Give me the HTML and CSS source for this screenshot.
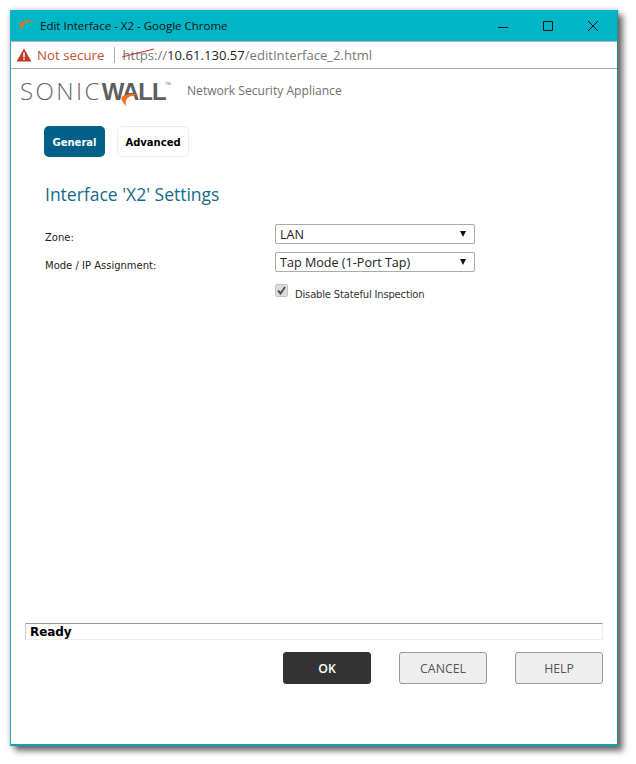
FILE: index.html
```html
<!DOCTYPE html>
<html>
<head>
    <title>Edit Interface - X2 - Google Chrome</title>
    <link rel="stylesheet" href="styles.css">
</head>
<body>
    <div class="window">
        <header class="titlebar">
            <svg class="favicon" width="16" height="12" viewBox="0 0 16 12">
                <path d="M16 1.2C11 0 5 0 1.5 2.5 0 3.8 .5 6 3.5 10.5 3 7 4.5 3.6 8 2.6 10.500 1.900 13 1.600 16 1.200Z" fill="#e8701a"/>
            </svg>
            <span class="title">Edit Interface - X2 - Google Chrome</span>
            <div class="controls">
                <svg width="12" height="12" viewBox="0 0 12 12"><path d="M1 7.500H11" stroke="#111" fill="none"/></svg>
                <svg width="12" height="12" viewBox="0 0 12 12"><path d="M1.500 1.500H10.500V10.500H1.500Z" stroke="#111" fill="none"/></svg>
                <svg width="12" height="12" viewBox="0 0 12 12"><path d="M1 1L11 11M11 1L1 11" stroke="#111" fill="none"/></svg>
            </div>
        </header>
        <div class="addressbar">
            <svg class="warn" width="16" height="14" viewBox="0 0 16 14">
                <path d="M8 .5L15.500 13.500H.5Z" fill="#c53929"/>
                <path d="M7.200 4.500H8.800V9.200H7.200ZM7.200 10.200H8.800V11.800H7.200Z" fill="#fff"/>
            </svg>
            <span class="not-secure">Not secure</span>
            <span class="divider"></span>
            <span class="url"><span class="scheme">https<svg class="strike" width="33" height="10" viewBox="0 0 33 10"><path d="M0 9L32 1" stroke="#c53929" stroke-width="1.200" fill="none"/></svg></span>://<span class="host">10.61.130.57</span>/editInterface_2.html</span>
        </div>
        <div class="brand">
            <div class="logo">
                <span class="logo-sonic">SONIC</span><span class="logo-wall">WALL</span><span class="logo-tm">TM</span>
                <svg class="swoosh" width="20" height="14" viewBox="0 0 20 14">
                    <path d="M20 1.500C14 .5 7 .5 3 3 0 4.500 1 7 6 13.500 5 9 6 5 10 3.400 13 2.400 16 2 20 1.500Z" fill="#f0701c"/>
                </svg>
            </div>
            <span class="appliance">Network Security Appliance</span>
        </div>
        <main class="content">
            <nav class="tabs">
                <a class="tab tab-active">General</a>
                <a class="tab">Advanced</a>
            </nav>
            <h1 class="heading">Interface 'X2' Settings</h1>
            <div class="form">
                <label class="field-label">Zone:</label>
                <div class="select"><span>LAN</span><i class="arrow"></i></div>
                <label class="field-label">Mode / IP Assignment:</label>
                <div class="select"><span>Tap Mode (1-Port Tap)</span><i class="arrow"></i></div>
                <div></div>
                <div class="check-row">
                    <span class="checkbox">
                        <svg width="13" height="13" viewBox="0 0 13 13"><path d="M3 6.500L5.500 9.500L10 3" stroke="#555" stroke-width="2" fill="none"/></svg>
                    </span>
                    <span class="check-label">Disable Stateful Inspection</span>
                </div>
            </div>
        </main>
        <div class="status">Ready</div>
        <div class="buttons">
            <button class="btn btn-ok">OK</button>
            <button class="btn">CANCEL</button>
            <button class="btn">HELP</button>
        </div>
    </div>
</body>
</html>
```

FILE: styles.css
```css
* {
    margin: 0;
    padding: 0;
    box-sizing: border-box;
}

body {
    background: #fff;
    font-family: "Open Sans", sans-serif;
    padding: 10px 18px 18px 10px;
    height: 764px;
    overflow: hidden;
}

.window {
    width: 608px;
    height: 736px;
    background: #fff;
    border: 1px solid #14b4c6;
    border-top: 0;
    border-right-color: #1b8f9c;
    border-bottom: 2px solid #17a0b0;
    box-shadow: 5px 5px 6px rgba(0, 0, 0, 0.55), 0 0 5px rgba(0, 0, 0, 0.25);
    display: flex;
    flex-direction: column;
}

.titlebar {
    height: 31px;
    background: #00b5c5;
    display: flex;
    align-items: center;
    padding-left: 8px;
    flex: none;
}

.favicon {
    margin-right: 5px;
}

.title {
    font-size: 11.500px;
    color: #111;
}

.controls {
    margin-left: auto;
    display: flex;
    gap: 33px;
    padding-right: 18px;
}

.addressbar {
    height: 28px;
    display: flex;
    align-items: center;
    padding-left: 5px;
    border-top: 1px solid #b5b5b5;
    border-bottom: 1px solid #a8a8a8;
    flex: none;
}

.not-secure {
    margin-left: 5px;
    color: #c5502f;
    font-size: 13.300px;
}

.divider {
    width: 1px;
    height: 16px;
    background: #aaa;
    margin: 0 7px 0 10px;
}

.url {
    font-size: 13.100px;
    color: #777;
}

.scheme {
    position: relative;
}

.strike {
    position: absolute;
    left: 0;
    top: 2px;
}

.host {
    color: #222;
}

.brand {
    display: flex;
    align-items: center;
    height: 42px;
    padding: 2px 0 0 9px;
    flex: none;
}

.logo {
    position: relative;
    width: 167px;
    font-family: "Open Sans", sans-serif;
    font-size: 24px;
    line-height: 28px;
    white-space: nowrap;
}

.logo-sonic {
    font-weight: 300;
    letter-spacing: 2.400px;
    color: #666;
}

.logo-wall {
    font-family: "Liberation Sans", sans-serif;
    font-weight: 700;
    letter-spacing: -1px;
    color: #5f5f5f;
}

.logo-tm {
    position: absolute;
    top: 4px;
    left: 145px;
    font-size: 4px;
    line-height: 6px;
    color: #666;
}

.swoosh {
    position: absolute;
    left: 100px;
    top: 16px;
}

.appliance {
    font-size: 12.100px;
    color: #6f6f6f;
    margin-bottom: 2px;
}

.content {
    flex: 1;
    padding: 15px 0 0 33px;
}

.tabs {
    display: flex;
    gap: 12px;
}

.tab {
    height: 31px;
    width: 61px;
    background: #006088;
    border-radius: 5px;
    color: #fff;
    font-family: "DejaVu Sans", sans-serif;
    font-size: 10px;
    font-weight: 700;
    display: flex;
    align-items: center;
    justify-content: center;
    padding-top: 1px;
}

.tab:not(.tab-active) {
    width: 72px;
    background: #fff;
    border: 1px solid #eee;
    color: #000;
}

.heading {
    font-size: 17.500px;
    font-weight: 400;
    color: #136a8a;
    margin: 25px 0 0 1px;
    line-height: 24px;
}

.form {
    display: grid;
    grid-template-columns: 230px 200px;
    row-gap: 8px;
    margin: 18px 0 0 1px;
    align-items: center;
}

.field-label {
    font-family: "DejaVu Sans", sans-serif;
    font-size: 10px;
    line-height: 12px;
    color: #222;
    padding-top: 8px;
}

.select {
    height: 20px;
    border: 1px solid #aaa;
    border-radius: 2px;
    font-size: 12.600px;
    color: #222;
    display: flex;
    align-items: center;
    justify-content: space-between;
    padding: 0 8px 0 4px;
}

.arrow {
    width: 0;
    height: 0;
    border-left: 3px solid transparent;
    border-right: 3px solid transparent;
    border-top: 6px solid #111;
}

.check-row {
    display: flex;
    align-items: center;
    height: 16px;
    margin-top: 2px;
}

.checkbox {
    width: 13px;
    height: 13px;
    background: #ddd;
    border: 1px solid #c4c4c4;
    border-radius: 2px;
    display: flex;
    align-items: center;
    justify-content: center;
    margin-right: 7px;
}

.checkbox svg {
    flex: none;
}

.check-label {
    font-family: "DejaVu Sans", sans-serif;
    font-size: 10px;
    letter-spacing: -0.180px;
    color: #333;
    padding-top: 8px;
}

.status {
    height: 17px;
    margin: 0 14px;
    border-top: 1px solid #999;
    border-left: 1px solid #ccc;
    border-right: 1px solid #eee;
    border-bottom: 1px solid #eee;
    font-family: "DejaVu Sans", sans-serif;
    font-size: 12px;
    font-weight: 700;
    letter-spacing: -0.100px;
    line-height: 16px;
    padding-left: 4px;
    color: #000;
    flex: none;
}

.buttons {
    display: flex;
    justify-content: flex-end;
    gap: 28px;
    margin: 12px 14px 0 0;
    height: 92px;
    flex: none;
}

.btn {
    width: 88px;
    height: 32px;
    background: #eee;
    border: 1px solid #999;
    border-radius: 3px;
    font-family: "Open Sans", sans-serif;
    font-size: 12.300px;
    color: #555;
}

.btn-ok {
    background: #333;
    border-color: #333;
    color: #fff;
    font-weight: 600;
}
```
